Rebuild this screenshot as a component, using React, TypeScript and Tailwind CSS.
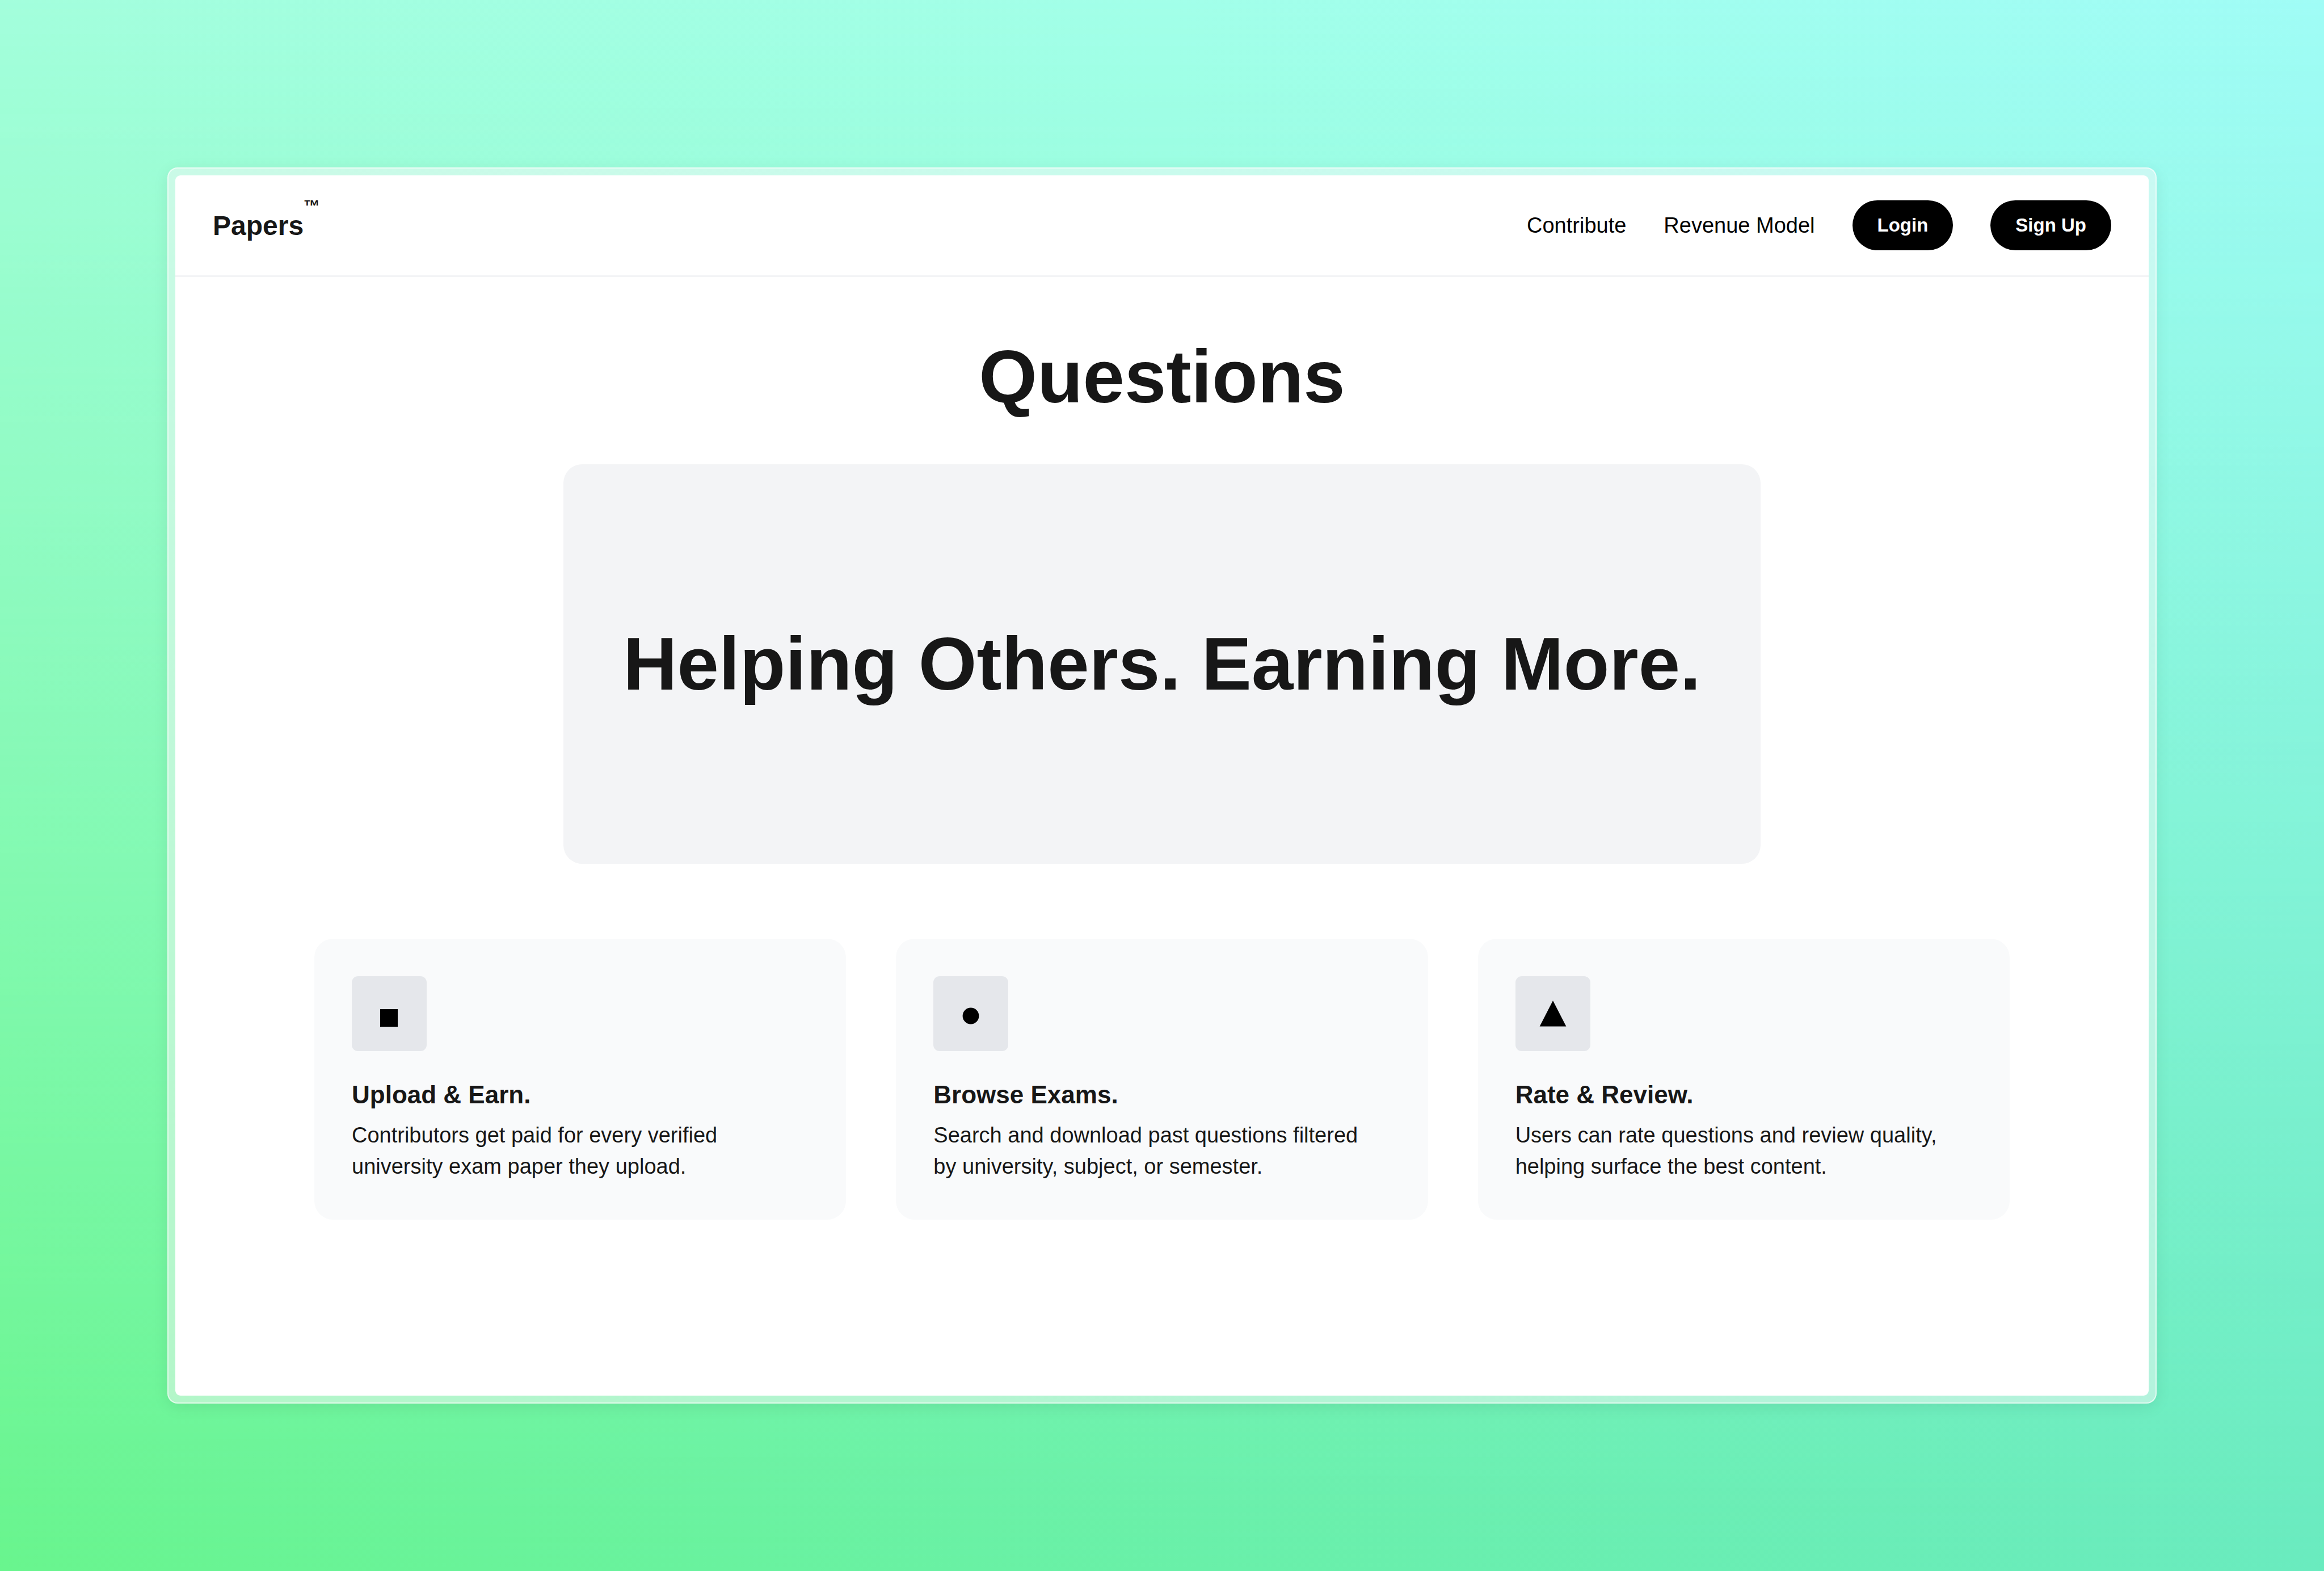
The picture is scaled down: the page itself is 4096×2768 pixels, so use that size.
import type { ReactNode } from "react";

type Feature = { title: string; text: string; shape: ReactNode };

const features: Feature[] = [
  {
    title: "Upload & Earn.",
    text: "Contributors get paid for every verified university exam paper they upload.",
    shape: <rect x="50" y="58" width="31" height="31" />,
  },
  {
    title: "Browse Exams.",
    text: "Search and download past questions filtered by university, subject, or semester.",
    shape: <circle cx="66" cy="70" r="14.4" />,
  },
  {
    title: "Rate & Review.",
    text: "Users can rate questions and review quality, helping surface the best content.",
    shape: <path d="M66 43 L89.4 88.5 H42.6 Z" />,
  },
];

function Header() {
  return (
    <header className="flex h-[179px] shrink-0 items-center justify-between border-b-3 border-gray-100 px-[66px]">
      <a href="#" className="text-[48px] leading-[77px] font-bold text-[#171717]">
        Papers<sup className="-top-6 align-super text-[29px] leading-0">™</sup>
      </a>
      <nav className="flex items-center gap-[66px] text-[38px] leading-[55px] text-black">
        <a href="#contribute">Contribute</a>
        <a href="#revenue">Revenue Model</a>
        <button className="h-[88px] rounded-full bg-black px-[44px] text-[33px] leading-[44px] font-bold text-white">
          Login
        </button>
        <button className="h-[88px] rounded-full bg-black px-[44px] text-[33px] leading-[44px] font-bold text-white">
          Sign Up
        </button>
      </nav>
    </header>
  );
}

function FeatureCard({ title, text, shape }: Feature) {
  return (
    <article className="rounded-[33px] bg-gray-50 p-[66px]">
      <div className="mb-[44px] size-[132px] rounded-[11px] bg-gray-200">
        <svg viewBox="0 0 132 132" className="size-full fill-black" aria-hidden="true">
          {shape}
        </svg>
      </div>
      <h3 className="mb-[11px] text-[44px] leading-[66px] font-bold">{title}</h3>
      <p className="pr-[22px] text-[38px] leading-[55px]">{text}</p>
    </article>
  );
}

export default function App() {
  return (
    <div className="relative isolate flex min-h-screen flex-col bg-linear-to-r from-[#69f58e] to-[#6aebbf] p-[295px] font-['Liberation_Sans',Arial,sans-serif]">
      <div className="absolute inset-0 -z-10 bg-linear-to-r from-[#a3fedc] via-[#a2ffe9] to-[#a0fcf6] mask-b-from-0% mask-b-to-100%" />
      <div className="flex flex-1 flex-col rounded-[18px] border-2 border-white/60 bg-[#f7f7f7]/50 p-[12px] shadow-[0_6px_28px_rgba(0,0,0,0.08)]">
        <div className="flex flex-1 flex-col overflow-hidden rounded-[9px] bg-white text-[#171717]">
          <Header />
          <main className="flex flex-col items-center px-[66px] pt-[110px]">
            <h1 className="mb-[88px] text-[132px] leading-[132px] font-bold">Questions</h1>
            <section className="mb-[132px] flex h-[704px] w-full max-w-[2110px] items-center justify-center rounded-[33px] bg-gray-100">
              <h2 className="text-[132px] leading-[132px] font-bold whitespace-nowrap">
                Helping Others. Earning More.
              </h2>
            </section>
            <section className="grid w-full max-w-[2988px] grid-cols-3 gap-[88px]">
              {features.map((feature) => (
                <FeatureCard key={feature.title} {...feature} />
              ))}
            </section>
          </main>
        </div>
      </div>
    </div>
  );
}
